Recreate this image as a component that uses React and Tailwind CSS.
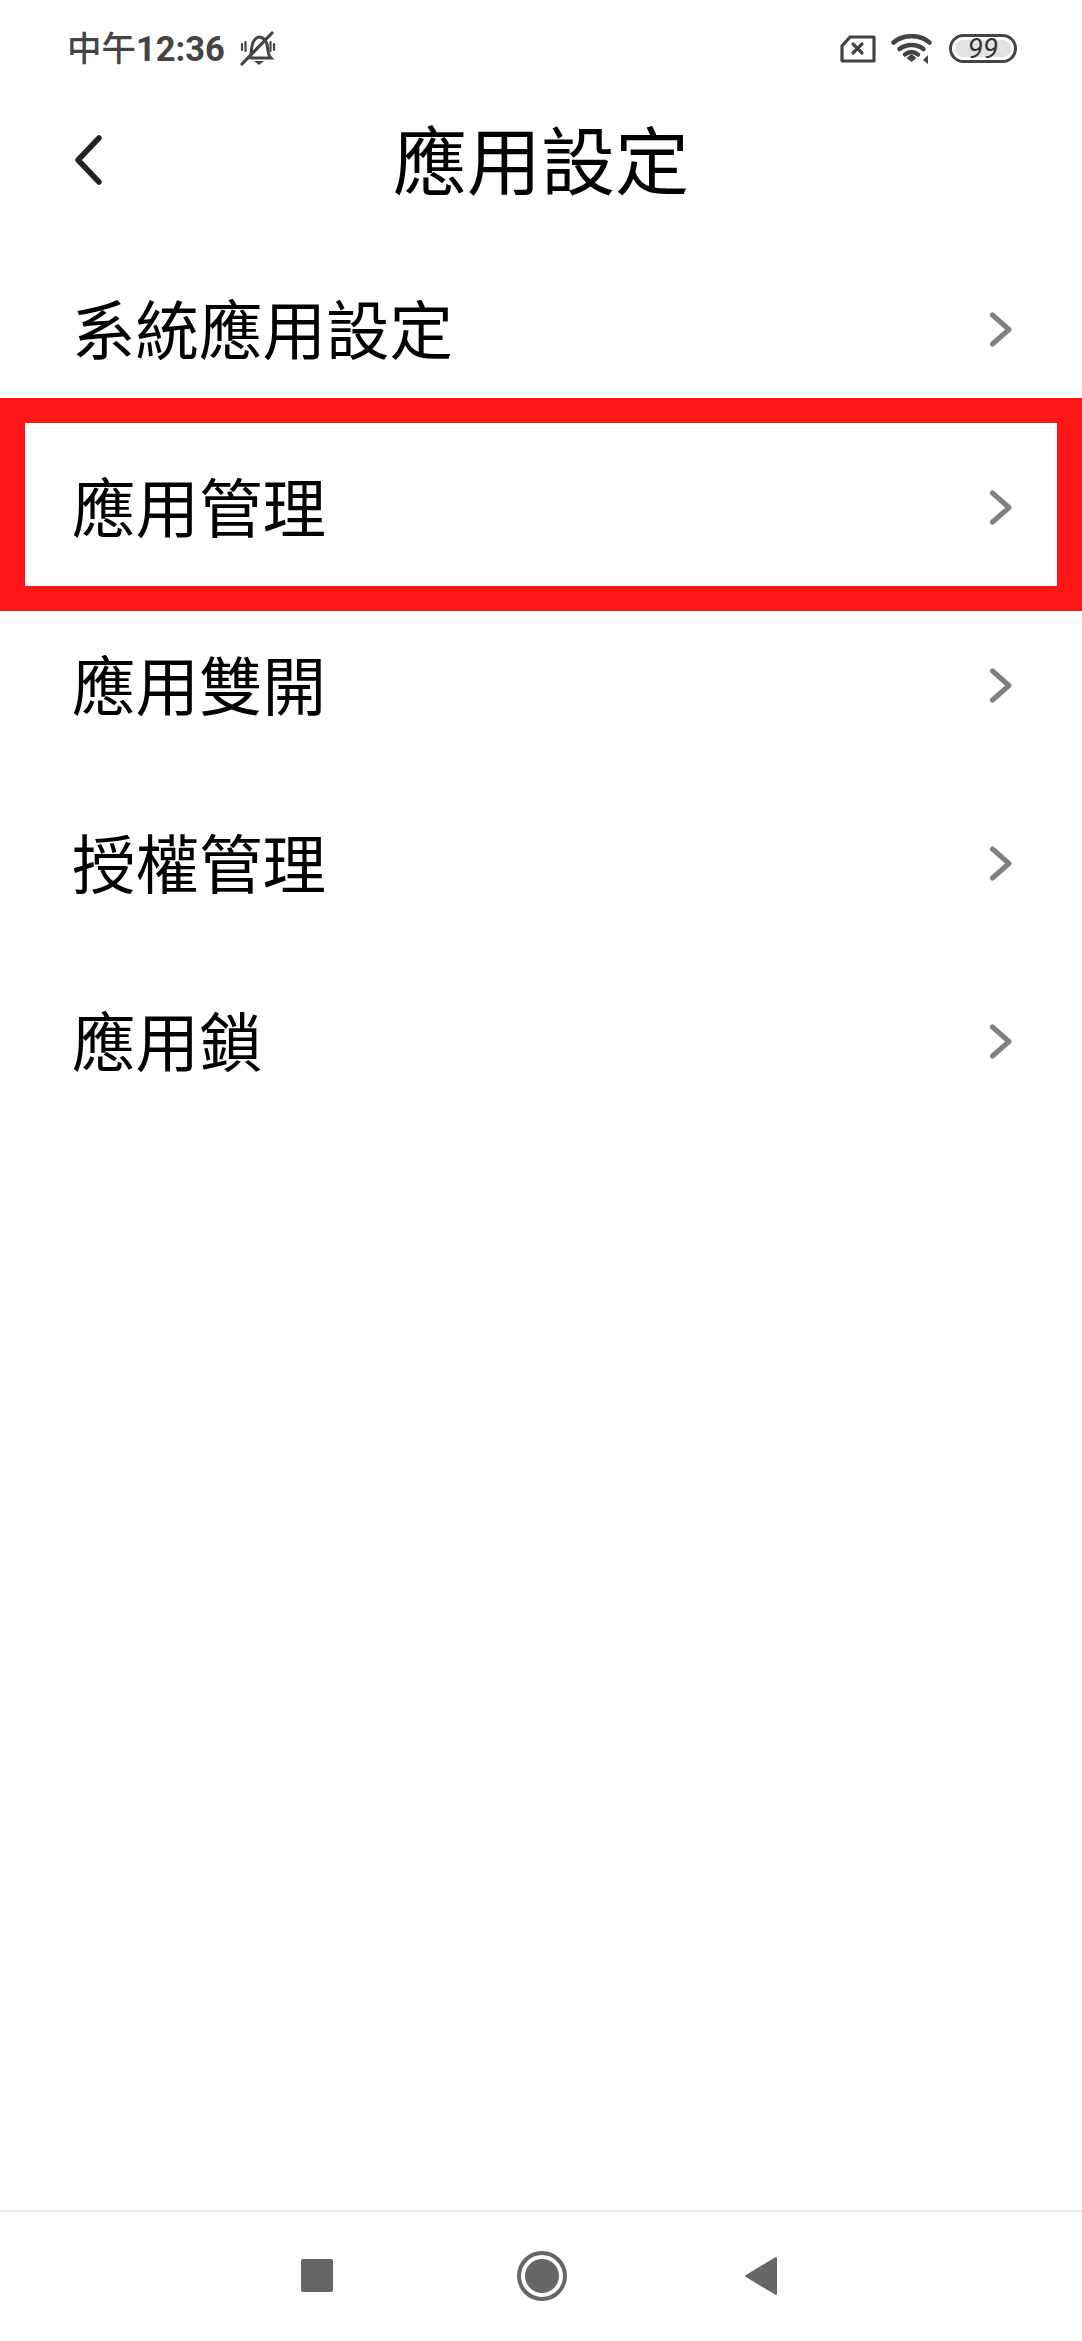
const rows = ["系統應用設定", "應用管理", "應用雙開", "授權管理", "應用鎖"];

const Chevron = () => (
  <svg width="24" height="36" viewBox="0 0 24 36" fill="none" stroke="#808080" strokeWidth="5" strokeLinecap="round" strokeLinejoin="round">
    <path d="M3.5 3 L20 17.5 L3.5 32" />
  </svg>
);

const BellOff = () => (
  <svg width="36" height="36" viewBox="0 0 36 36" fill="none" stroke="#444" strokeWidth="3" strokeLinecap="round">
    <path d="M9 27 C12 24 11 20 12 15 C13 9 17 6 19 6 C24 6 27 11 27.500 16 C28 21 28 24 31 27 L12 27" />
    <path d="M2 33 L32 2" strokeWidth="3.200" />
    <path d="M2 13 V19 M5.500 11 V20 M30.500 11 V20 M34 13 V19" strokeWidth="2.200" />
    <path d="M14 30 H24 L19 34 Z" fill="#444" stroke="none" />
  </svg>
);

const StatusRight = () => (
  <div className="flex items-center">
    <svg width="36" height="28" viewBox="0 0 36 28" fill="none" stroke="#444" strokeWidth="3.200" strokeLinejoin="round" strokeLinecap="round">
      <path d="M10 2 H34 V26 H3 Q2 26 2 25 V11 Z" />
      <path d="M13 9 L22 18 M22 9 L13 18" />
    </svg>
    <svg className="ml-[15px]" width="42" height="30" viewBox="0 0 42 30" fill="none" stroke="#444" strokeWidth="4.500" strokeLinecap="round">
      <path d="M2.500 8.500 C12 0 29 0 38.500 8.500" />
      <path d="M8.500 15 C15 9.500 26 9.500 32.500 15" />
      <path d="M14 20.500 C18 17.500 23 17.500 27 20.500" />
      <path d="M15.500 24 L20.500 20 L25.500 24 L20.500 28 Z" fill="#444" stroke="none" />
      <path d="M32 26 L37 21 V30 Z" fill="#444" stroke="none" />
    </svg>
    <div className="ml-[16px] flex h-[29px] w-[68px] items-center justify-center rounded-full border-[3.500px] border-[#444] p-[3px]">
      <div className="flex h-full w-full items-center justify-center rounded-full bg-[#e2e2e2] font-['Roboto',sans-serif] text-[28px] leading-none text-[#333] italic">
        99
      </div>
    </div>
  </div>
);

export default function App() {
  return (
    <div className="relative flex h-[2341px] w-[1082px] flex-col overflow-hidden bg-white font-['Noto_Sans_CJK_TC',sans-serif] text-black">
      <div className="flex h-[97px] shrink-0 items-center justify-between pr-[65px] pl-[67px]">
        <div className="flex items-center text-[#444]">
          <span className="pt-[2px] font-['Roboto','Noto_Sans_CJK_TC',sans-serif] text-[34.500px] leading-none font-medium">
            中午<span className="font-bold">12:36</span>
          </span>
          <div className="ml-[15px]">
            <BellOff />
          </div>
        </div>
        <StatusRight />
      </div>

      <div className="relative flex h-[126px] shrink-0 items-center justify-center">
        <svg className="absolute top-[38px] left-[74px]" width="30" height="50" viewBox="0 0 30 50" fill="none" stroke="#222" strokeWidth="5.500" strokeLinecap="round" strokeLinejoin="round">
          <path d="M25 3 L4 25 L25 47" />
        </svg>
        <h1 className="pb-[7px] text-[74px] leading-none font-normal">應用設定</h1>
      </div>

      <div className="mt-[18px] flex flex-col">
        {rows.map((row) => (
          <div key={row} className="flex h-[178px] items-center justify-between pr-[69px] pl-[72px]">
            <span className="pb-[7px] text-[63.500px] leading-none">{row}</span>
            <Chevron />
          </div>
        ))}
      </div>

      {/* red highlight drawn over the second row */}
      <div className="absolute top-[398px] left-0 h-[213px] w-[1082px] border-[25px] border-[#ff1616]" />

      <div className="mt-auto flex h-[131px] shrink-0 items-center border-t-2 border-[#e6e6e6] pb-[2px]">
        <div className="ml-[301px] h-[33px] w-[32px] rounded-[2px] bg-[#666]" />
        <div className="ml-[184px] flex h-[50px] w-[50px] items-center justify-center rounded-full border-[4px] border-[#666]">
          <div className="h-[34px] w-[34px] rounded-full bg-[#666]" />
        </div>
        <svg className="ml-[177px]" width="34" height="40" viewBox="0 0 34 40" fill="#666" stroke="#666" strokeWidth="2" strokeLinejoin="round">
          <path d="M32 2 V38 L2 20 Z" />
        </svg>
      </div>
    </div>
  );
}
